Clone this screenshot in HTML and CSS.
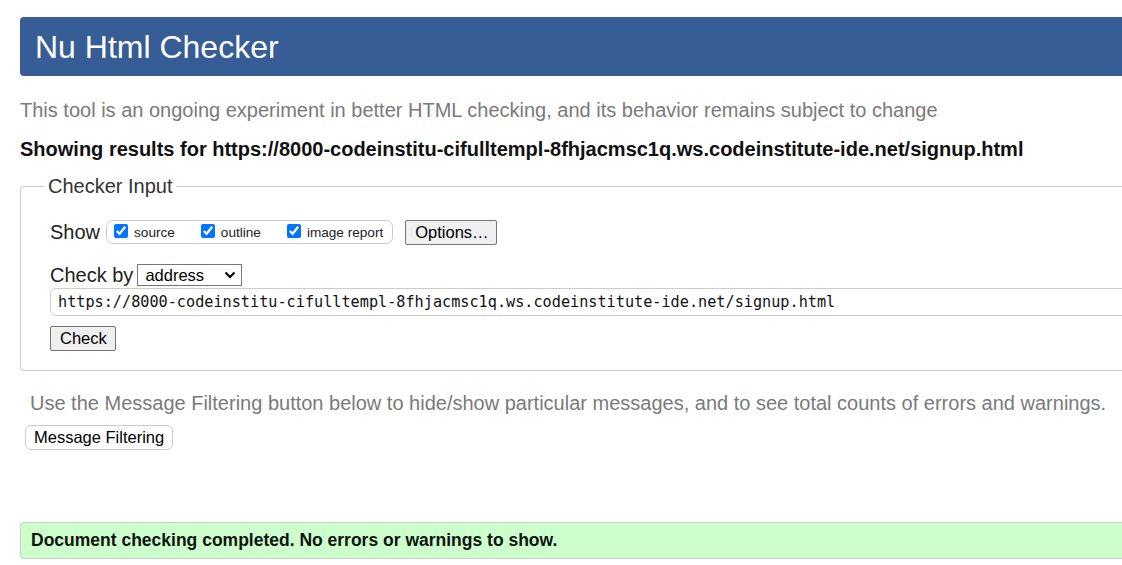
FILE: index.html
```html
<!DOCTYPE html>
<html lang="en">
<head>
<meta charset="utf-8">
<title>Nu Html Checker</title>
<link rel="stylesheet" href="styles.css">
</head>
<body>
<div class="page">
  <h1 class="title">Nu Html Checker</h1>
  <p class="lead">This tool is an ongoing experiment in better HTML checking, and its behavior remains subject to change</p>
  <p class="results">Showing results for https://8000-codeinstitu-cifulltempl-8fhjacmsc1q.ws.codeinstitute-ide.net/signup.html</p>
  <fieldset class="checker">
    <legend class="legend">Checker Input</legend>
    <div class="row show-row">
      <span class="label">Show</span>
      <span class="opts">
        <label class="opt"><input type="checkbox" checked><span>source</span></label>
        <label class="opt"><input type="checkbox" checked><span>outline</span></label>
        <label class="opt"><input type="checkbox" checked><span>image report</span></label>
      </span>
      <button class="btn options">Options…</button>
    </div>
    <div class="row by-row">
      <span class="label">Check by</span>
      <span class="select-wrap">
        <select class="select"><option>address</option></select>
        <svg class="chev" width="12" height="8" viewBox="0 0 12 8" aria-hidden="true"><path d="M1.5 1.5 L6 6 L10.5 1.5" fill="none" stroke="#000" stroke-width="2"/></svg>
      </span>
    </div>
    <input class="url" type="text" value="https://8000-codeinstitu-cifulltempl-8fhjacmsc1q.ws.codeinstitute-ide.net/signup.html">
    <button class="btn check">Check</button>
  </fieldset>
  <p class="filter-note">Use the Message Filtering button below to hide/show particular messages, and to see total counts of errors and warnings.</p>
  <button class="btn filter">Message Filtering</button>
  <p class="success">Document checking completed. No errors or warnings to show.</p>
</div>
</body>
</html>
```

FILE: styles.css
```css
html, body {
  margin: 0;
  padding: 0;
  overflow: hidden;
  background: #fff;
}
body {
  font-family: Arial, "Liberation Sans", Helvetica, sans-serif;
  color: #222;
}
.page {
  width: 1120px;
  padding: 17px 0 0 20px;
}
.title {
  margin: 0;
  height: 59px;
  box-sizing: border-box;
  padding: 12px 0 0 15px;
  background: #365d95;
  color: #fff;
  font-weight: normal;
  font-size: 32px;
  line-height: 36px;
  border-radius: 4px 0 0 4px;
}
.lead {
  margin: 22px 0 0 0;
  color: #7a7a7a;
  font-size: 20px;
  line-height: 24px;
}
.results {
  margin: 15px 0 0 0;
  font-weight: bold;
  font-size: 20px;
  line-height: 24px;
  color: #111;
}
.checker {
  margin: 14px 0 0 0;
  border: 1px solid #ccc;
  border-right: none;
  border-radius: 4px 0 0 4px;
  padding: 22px 0 19px 29px;
  min-width: 0;
}
.legend {
  padding: 0 3px;
  margin-left: -5px;
  font-size: 20px;
  line-height: 22px;
  color: #333;
}
.row {
  display: flex;
  align-items: center;
}
.label {
  font-size: 20px;
  color: #222;
}
.show-row {
  height: 26px;
}
.opts {
  margin-left: 6px;
  display: inline-flex;
  align-items: center;
  box-sizing: border-box;
  height: 24px;
  border: 1px solid #ccc;
  border-radius: 7px;
  padding: 0 9px 0 7px;
  gap: 26px;
}
.opt {
  display: inline-flex;
  align-items: center;
  font-size: 13.6px;
  color: #222;
}
.opt input {
  margin: 0 6px 3px 0;
  width: 14px;
  height: 14px;
  accent-color: #0075ff;
}
.btn {
  font-family: Arial, "Liberation Sans", sans-serif;
  font-size: 16.5px;
  color: #000;
  background: #efefef;
  border: 1px solid #767676;
  border-radius: 2px;
  padding: 0 9px;
  height: 25px;
  white-space: nowrap;
}
.options {
  margin-left: 12px;
  width: 92px;
}
.by-row {
  margin-top: 19px;
  height: 22px;
}
.select-wrap {
  position: relative;
  margin-left: 4px;
  display: inline-flex;
}
.select {
  appearance: none;
  -webkit-appearance: none;
  box-sizing: border-box;
  width: 105px;
  height: 22px;
  padding: 0 0 0 7px;
  font-family: Arial, "Liberation Sans", sans-serif;
  font-size: 16.5px;
  border: 1px solid #767676;
  border-radius: 0;
  background: #fff;
  color: #000;
}
.chev {
  position: absolute;
  right: 6px;
  top: 7px;
  pointer-events: none;
}
.url {
  display: block;
  box-sizing: border-box;
  margin: 2px 0 0 0;
  width: 1100px;
  height: 28px;
  padding: 0 7px;
  border: 1px solid #ccc;
  border-radius: 6px;
  font-family: "DejaVu Sans Mono", "Liberation Mono", monospace;
  font-size: 15.2px;
  color: #111;
}
.check {
  display: block;
  margin-top: 10px;
  width: 66px;
}
.filter-note {
  margin: 20px 0 0 10px;
  color: #7a7a7a;
  font-size: 20px;
  line-height: 24px;
}
.filter {
  display: block;
  margin: 10px 0 0 5px;
  height: 25px;
  background: #fff;
  border: 1px solid #ccc;
  border-radius: 6px;
  padding: 0 8px;
}
.success {
  margin: 72px 0 0 0;
  box-sizing: border-box;
  height: 37px;
  padding: 0 0 0 10px;
  background: #ccffcc;
  border: 1px solid #ccc;
  border-right: none;
  border-radius: 4px 0 0 4px;
  font-weight: bold;
  font-size: 17.5px;
  line-height: 35px;
  color: #111;
}
```
